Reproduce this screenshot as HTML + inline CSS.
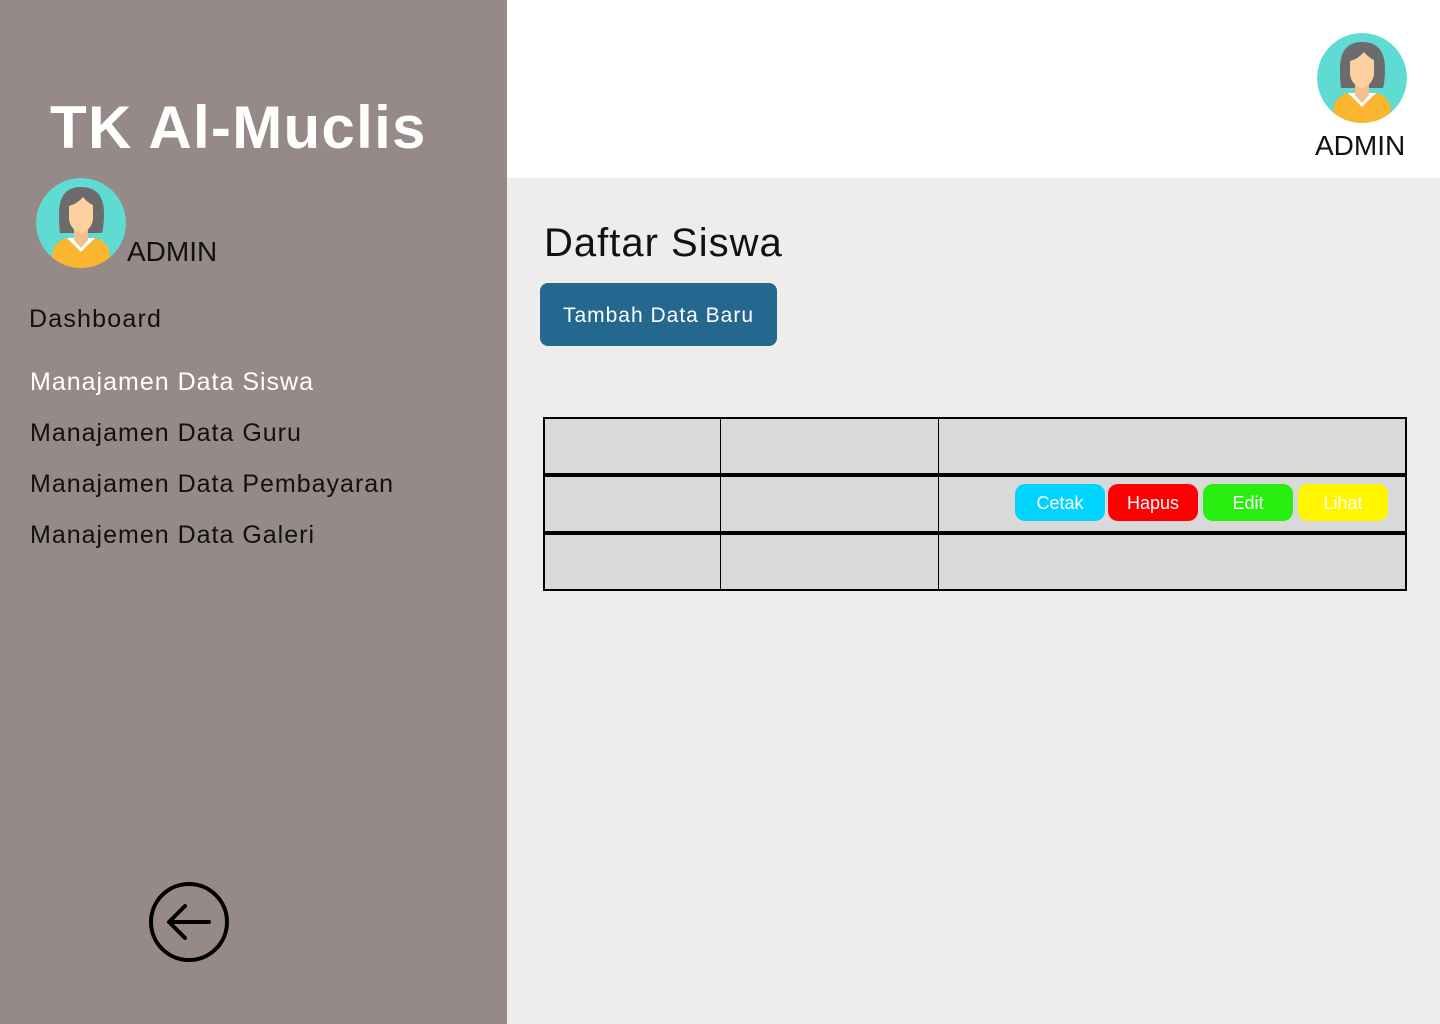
<!DOCTYPE html>
<html><head><meta charset="utf-8"><style>
*{margin:0;padding:0;box-sizing:border-box}
body{width:1440px;height:1024px;position:relative;background:#eeedeb;font-family:"Liberation Sans",sans-serif;overflow:hidden}
.side{position:absolute;left:0;top:0;width:507px;height:1024px;background:#958a88}
.top{position:absolute;left:507px;top:0;width:933px;height:178px;background:#fff}
.abs{position:absolute;white-space:nowrap}
.menu{font-size:25px;color:#111;letter-spacing:1px}
.btn{position:absolute;top:484px;width:90px;height:37px;border-radius:10px;color:#fff;font-size:18px;text-align:center;line-height:39px}
</style></head><body>
<div class="side"></div>
<div class="top"></div>
<div class="abs" style="left:50px;top:93px;font-size:60px;font-weight:bold;color:#fff;letter-spacing:1.3px">TK Al-Muclis</div>
<svg class="abs" style="left:36px;top:178px" width="90" height="90" viewBox="0 0 90 90">
<defs><clipPath id="c1"><circle cx="45" cy="45" r="45"/></clipPath>
<g id="av"><circle cx="45" cy="45" r="45" fill="#5fdbd3"/>
<path d="M23 36 Q23 9 45 9 Q68 9 68 36 Q68 48 66 55 L24 55 Q23 48 23 36Z" fill="#6b6b6b"/>
<path d="M14 92 L17 72 Q20 63 31 60 L59 60 Q70 63 73 72 L76 92Z" fill="#fbb52e"/>
<path d="M31 60 L45 74 L59 60Z" fill="#fff"/>
<path d="M38 46 L52 46 L52 62 L45 70 L38 62Z" fill="#f5bd8a"/>
<path d="M33 28 Q41 26 47 19 Q52 25 57 27 L57 41 Q56 51 45 56 Q34 51 33 41Z" fill="#fdd09f"/></g></defs>
<g clip-path="url(#c1)"><use href="#av"/></g></svg>
<div class="abs" style="left:127px;top:236px;font-size:28px;color:#111">ADMIN</div>
<div class="abs menu" style="left:29px;top:305px;letter-spacing:1.2px">Dashboard</div>
<div class="abs menu" style="left:30px;top:368px;color:#fff">Manajamen Data Siswa</div>
<div class="abs menu" style="left:30px;top:419px">Manajamen Data Guru</div>
<div class="abs menu" style="left:30px;top:470px">Manajamen Data Pembayaran</div>
<div class="abs menu" style="left:30px;top:521px">Manajemen Data Galeri</div>
<svg class="abs" style="left:148px;top:881px" width="82" height="82" viewBox="0 0 82 82" fill="none" stroke="#000" stroke-width="4" stroke-linecap="round" stroke-linejoin="round">
<circle cx="41" cy="41" r="38"/><path d="M61 41H21M37 25L21 41L37 57"/></svg>
<svg class="abs" style="left:1317px;top:33px" width="90" height="90" viewBox="0 0 90 90">
<defs><clipPath id="c2"><circle cx="45" cy="45" r="45"/></clipPath></defs>
<g clip-path="url(#c2)"><use href="#av"/></g></svg>
<div class="abs" style="left:1315px;top:130px;font-size:28px;color:#111">ADMIN</div>
<div class="abs" style="left:544px;top:221px;font-size:40px;color:#111;letter-spacing:1px">Daftar Siswa</div>
<div class="abs" style="left:540px;top:283px;width:237px;height:63px;background:#246890;border-radius:8px;color:#fff;font-size:21px;text-align:center;line-height:65px;letter-spacing:1px">Tambah Data Baru</div>
<div class="abs" style="left:543px;top:417px;width:864px;height:174px;background:#d9d9d9;border:2px solid #000"></div>
<div class="abs" style="left:543px;top:473px;width:864px;height:4px;background:#000"></div>
<div class="abs" style="left:543px;top:531px;width:864px;height:4px;background:#000"></div>
<div class="abs" style="left:720px;top:417px;width:1px;height:174px;background:#000"></div>
<div class="abs" style="left:938px;top:417px;width:1px;height:174px;background:#000"></div>
<div class="btn" style="left:1015px;background:#00d4ff">Cetak</div>
<div class="btn" style="left:1108px;background:#ff0000">Hapus</div>
<div class="btn" style="left:1203px;background:#27ee0f">Edit</div>
<div class="btn" style="left:1298px;background:#fff600">Lihat</div>
</body></html>
